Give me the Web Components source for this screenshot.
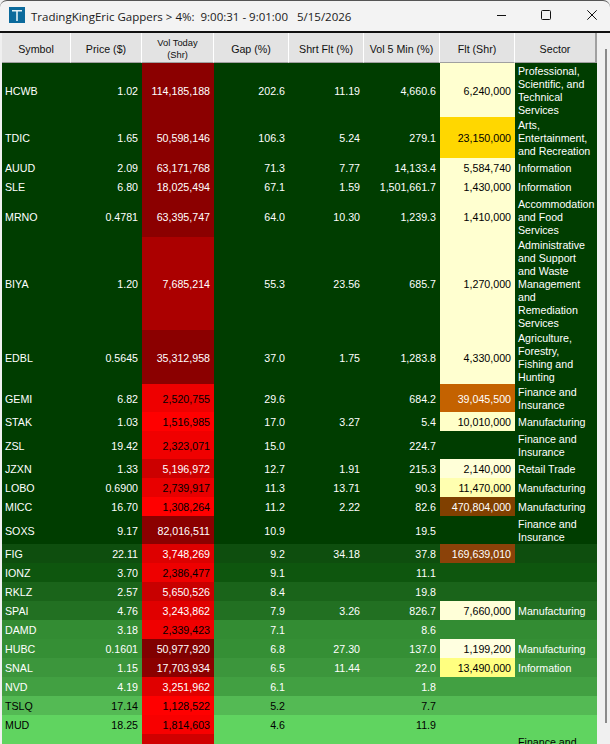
<!DOCTYPE html>
<html>
<head>
<meta charset="utf-8">
<title>TradingKingEric Gappers</title>
<style>
  html, body { margin: 0; padding: 0; height: 100%; overflow: hidden; background: #f0f0f0; }
</style>
</head>
<body>
<gap-window></gap-window>

<template id="title-bar-tpl">
  <style>
    :host {
      display: flex;
      align-items: center;
      height: 31px;
      box-sizing: border-box;
      padding: 1px 13px 0 9px;
      background: #f3f3f3;
      border-top: 1px solid #555;
      border-radius: 7px 7px 0 0;
      font: 11.5px "Open Sans", "Noto Sans", sans-serif;
      color: #1a1a1a;
    }
    .logo { flex: none; width: 16px; height: 16px; margin: -3px 6px 0 0; }
    .name { flex: 1; white-space: pre; }
    .btns { display: flex; gap: 36px; align-items: center; margin-top: -3px; }
    .min { width: 9px; margin-right: -1px; }
    svg { display: block; }
  </style>
  <svg class="logo" viewBox="0 0 16 16">
    <rect width="16" height="16" fill="#0b6a9c"/>
    <path d="M3 3h10v1.6H8.8V14H7.2V4.6H3z" fill="#e4f0f6"/>
  </svg>
  <span class="name"><slot></slot></span>
  <div class="btns">
    <svg class="min" height="10" viewBox="0 0 9 10"><path d="M0 5.5h9" stroke="#111" fill="none"/></svg>
    <svg width="10" height="10" viewBox="0 0 10 10"><rect x=".5" y=".5" width="9" height="9" rx="1" stroke="#111" fill="none"/></svg>
    <svg width="10" height="10" viewBox="0 0 10 10"><path d="M.3.3l9.4 9.4M9.7.3L.3 9.7" stroke="#111" fill="none"/></svg>
  </div>
</template>

<template id="gap-header-tpl">
  <style>
    :host {
      display: grid;
      grid-template-columns: var(--cols);
      height: 30px;
      font: 10.67px "Liberation Sans", Arial, sans-serif;
      color: #111;
    }
    div {
      display: flex;
      align-items: center;
      justify-content: center;
      text-align: center;
      background: #e3e3e3;
      border-right: 1px solid #fff;
      border-bottom: 1px solid #a0a0a0;
      box-sizing: border-box;
      padding-top: 2px;
    }
    div.small { font-size: 9.33px; line-height: 12px; padding-top: 3px; }
    div:last-child { border-right: 2px solid #a0a0a0; }
  </style>
  <div>Symbol</div>
  <div>Price ($)</div>
  <div class="small">Vol Today<br>(Shr)</div>
  <div>Gap (%)</div>
  <div>Shrt Flt (%)</div>
  <div>Vol 5 Min (%)</div>
  <div>Flt (Shr)</div>
  <div>Sector</div>
</template>

<template id="gap-row-tpl">
  <style>
    :host {
      display: grid;
      grid-template-columns: var(--cols);
      min-height: 19px;
      font: 10.67px/13px "Liberation Sans", Arial, sans-serif;
    }
    div {
      display: flex;
      align-items: center;
      justify-content: flex-end;
      padding: 2px 4px 0 0;
      white-space: nowrap;
      min-width: 0;
    }
    .sym { justify-content: flex-start; padding-left: 3px; padding-right: 0; }
    .sector { justify-content: flex-start; padding: 2px 2px 0 3px; white-space: normal; }
  </style>
  <div class="sym"></div>
  <div class="price"></div>
  <div class="vol"></div>
  <div class="gap"></div>
  <div class="shrt"></div>
  <div class="five"></div>
  <div class="flt"></div>
  <div class="sector"></div>
</template>

<script>
const DARK = '#003d00';
const CREAM = '#ffffd0';

// symbol, price, vol, gap, short, vol5, float, sector, row colour, vol colour, float colour
const ROWS = [
  ['HCWB', '1.02', '114,185,188', '202.6', '11.19', '4,660.6', '6,240,000', 'Professional, Scientific, and Technical Services', DARK, '#8b0000', CREAM],
  ['TDIC', '1.65', '50,598,146', '106.3', '5.24', '279.1', '23,150,000', 'Arts, Entertainment, and Recreation', DARK, '#8b0000', '#ffd700'],
  ['AUUD', '2.09', '63,171,768', '71.3', '7.77', '14,133.4', '5,584,740', 'Information', DARK, '#8b0000', CREAM],
  ['SLE', '6.80', '18,025,494', '67.1', '1.59', '1,501,661.7', '1,430,000', 'Information', DARK, '#8b0000', CREAM],
  ['MRNO', '0.4781', '63,395,747', '64.0', '10.30', '1,239.3', '1,410,000', 'Accommodation and Food Services', DARK, '#8b0000', CREAM],
  ['BIYA', '1.20', '7,685,214', '55.3', '23.56', '685.7', '1,270,000', 'Administrative and Support and Waste Management and Remediation Services', DARK, '#ab0000', CREAM],
  ['EDBL', '0.5645', '35,312,958', '37.0', '1.75', '1,283.8', '4,330,000', 'Agriculture, Forestry, Fishing and Hunting', DARK, '#8b0000', CREAM],
  ['GEMI', '6.82', '2,520,755', '29.6', '', '684.2', '39,045,500', 'Finance and Insurance', DARK, '#ee0000', '#c46200'],
  ['STAK', '1.03', '1,516,985', '17.0', '3.27', '5.4', '10,010,000', 'Manufacturing', DARK, '#ff0000', '#ffffc8'],
  ['ZSL', '19.42', '2,323,071', '15.0', '', '224.7', '', 'Finance and Insurance', DARK, '#f00000', ''],
  ['JZXN', '1.33', '5,196,972', '12.7', '1.91', '215.3', '2,140,000', 'Retail Trade', DARK, '#cc0000', '#ffffd8'],
  ['LOBO', '0.6900', '2,739,917', '11.3', '13.71', '90.3', '11,470,000', 'Manufacturing', DARK, '#e80000', '#ffffb0'],
  ['MICC', '16.70', '1,308,264', '11.2', '2.22', '82.6', '470,804,000', 'Manufacturing', DARK, '#ff0000', '#804000'],
  ['SOXS', '9.17', '82,016,511', '10.9', '', '19.5', '', 'Finance and Insurance', DARK, '#8b0000', ''],
  ['FIG', '22.11', '3,748,269', '9.2', '34.18', '37.8', '169,639,010', '', '#0e4e0e', '#dd0000', '#8b4209'],
  ['IONZ', '3.70', '2,386,477', '9.1', '', '11.1', '', '', '#0e560e', '#ee0000', ''],
  ['RKLZ', '2.57', '5,650,526', '8.4', '', '19.8', '', '', '#1a641a', '#c80000', ''],
  ['SPAI', '4.76', '3,243,862', '7.9', '3.26', '826.7', '7,660,000', 'Manufacturing', '#227022', '#e00000', '#ffffd8'],
  ['DAMD', '3.18', '2,339,423', '7.1', '', '8.6', '', '', '#338c33', '#f00000', ''],
  ['HUBC', '0.1601', '50,977,920', '6.8', '27.30', '137.0', '1,199,200', 'Manufacturing', '#358f35', '#800000', '#ffffe0'],
  ['SNAL', '1.15', '17,703,934', '6.5', '11.44', '22.0', '13,490,000', 'Information', '#3c963c', '#8b0000', '#ffff80'],
  ['NVD', '4.19', '3,251,962', '6.1', '', '1.8', '', '', '#42a042', '#e00000', ''],
  ['TSLQ', '17.14', '1,128,522', '5.2', '', '7.7', '', '', '#54ba54', '#ff0000', ''],
  ['MUD', '18.25', '1,814,603', '4.6', '', '11.9', '', '', '#60d460', '#f80000', ''],
  ['', '', '', '', '', '', '', 'Finance and Insurance', '#60d460', '#d00000', '']
];

// rows with pale backgrounds get black text, same for the bright reds
const BLACK_ROWS = ['TSLQ', 'MUD', ''];
const BLACK_VOL = ['2,520,755', '1,516,985', '2,323,071', '2,739,917', '1,308,264', '2,386,477', '2,339,423', '1,128,522', '1,814,603'];
const WHITE_FLT = ['#c46200', '#804000', '#8b4209'];

function cloneTpl(id) {
  return document.getElementById(id).content.cloneNode(true);
}

class TitleBar extends HTMLElement {
  constructor() {
    super();
    this.attachShadow({ mode: 'open' }).appendChild(cloneTpl('title-bar-tpl'));
  }
}

class GapHeader extends HTMLElement {
  constructor() {
    super();
    this.attachShadow({ mode: 'open' }).appendChild(cloneTpl('gap-header-tpl'));
  }
}

class GapRow extends HTMLElement {
  constructor() {
    super();
    this.attachShadow({ mode: 'open' }).appendChild(cloneTpl('gap-row-tpl'));
  }

  set data(d) {
    const [sym, price, vol, gap, shrt, five, flt, sector, rowBg, volBg, fltBg] = d;
    const $ = (c) => this.shadowRoot.querySelector(c);
    $('.sym').textContent = sym;
    $('.price').textContent = price;
    $('.vol').textContent = vol;
    $('.gap').textContent = gap;
    $('.shrt').textContent = shrt;
    $('.five').textContent = five;
    $('.flt').textContent = flt;
    $('.sector').textContent = sector;
    this.style.background = rowBg;
    this.style.color = BLACK_ROWS.includes(sym) ? '#000' : '#fff';
    $('.vol').style.background = volBg;
    $('.vol').style.color = BLACK_VOL.includes(vol) ? '#000' : '#fff';
    if (fltBg) {
      $('.flt').style.background = fltBg;
      $('.flt').style.color = WHITE_FLT.includes(fltBg) ? '#fff' : '#000';
    }
  }
}

class GapTable extends HTMLElement {
  constructor() {
    super();
    this.attachShadow({ mode: 'open' }).innerHTML = `
      <style>
        :host {
          display: block;
          flex: 1;
          min-height: 0;
          overflow: hidden;
          position: relative;
          --cols: 69px 71px 72px 75px 75px 76px 75px 82px;
          padding: 0 13px 0 2px;
          background: #f0f0f0;
          border-top: 2px solid #111;
        }
        .thumb {
          position: absolute;
          right: 3px;
          top: 16px;
          bottom: 21px;
          width: 2px;
          background: #8a8a8a;
        }
      </style>
      <gap-header></gap-header>
      <div id="rows"></div>
      <div class="thumb"></div>
    `;
  }

  connectedCallback() {
    const box = this.shadowRoot.getElementById('rows');
    ROWS.forEach((r) => {
      const row = document.createElement('gap-row');
      row.data = r;
      box.appendChild(row);
    });
  }
}

class GapWindow extends HTMLElement {
  constructor() {
    super();
    this.attachShadow({ mode: 'open' }).innerHTML = `
      <style>
        :host { display: flex; flex-direction: column; height: 744px; width: 610px; background: #f0f0f0; overflow: hidden; }
      </style>
      <title-bar>TradingKingEric Gappers &gt; 4%:  9:00:31 - 9:01:00   5/15/2026</title-bar>
      <gap-table></gap-table>
    `;
  }
}

customElements.define('title-bar', TitleBar);
customElements.define('gap-header', GapHeader);
customElements.define('gap-row', GapRow);
customElements.define('gap-table', GapTable);
customElements.define('gap-window', GapWindow);
</script>
</body>
</html>
